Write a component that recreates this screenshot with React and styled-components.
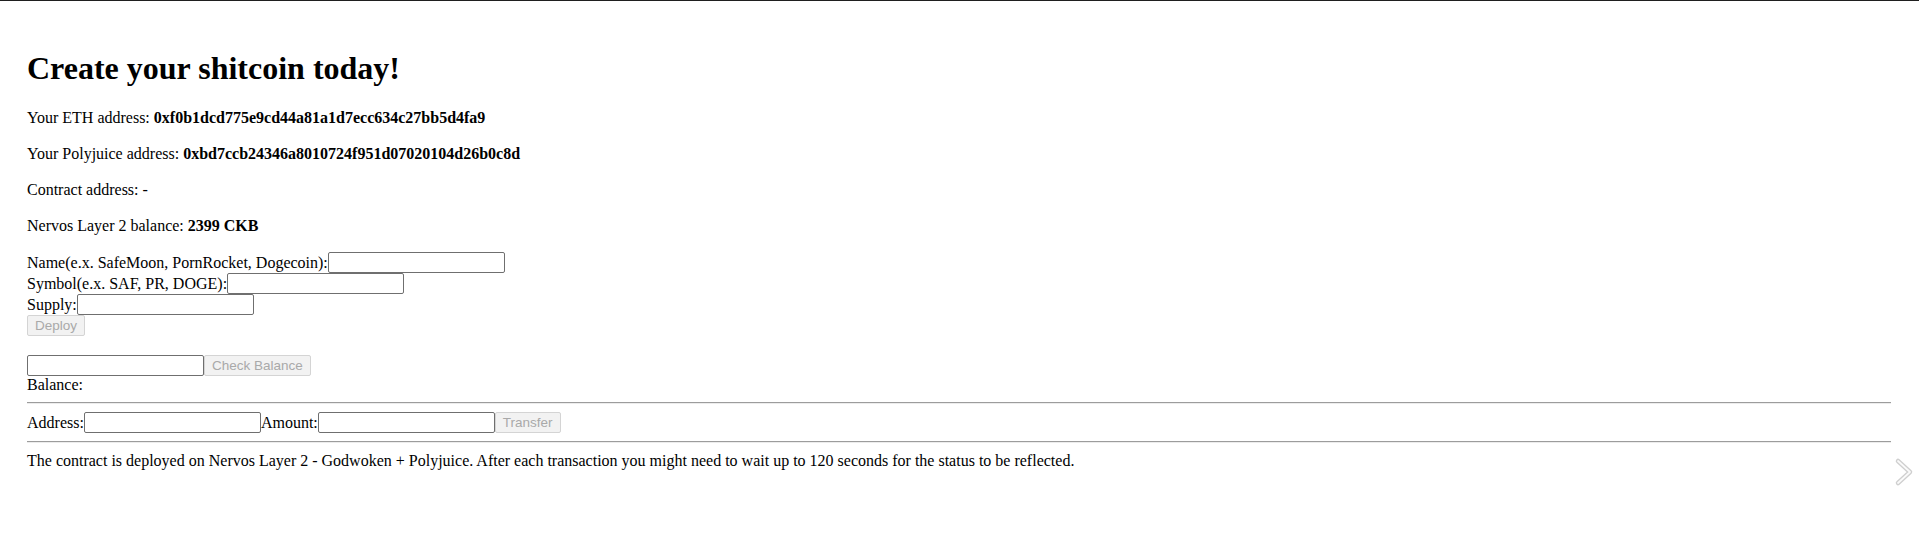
import React from "react";
import styled, { createGlobalStyle } from "styled-components";

const GlobalStyle = createGlobalStyle`
  body {
    margin: 0;
    background: #fff;
    border-top: 1px solid #1f1f1f;
    font-family: "Liberation Serif", "Times New Roman", serif;
    color: #000;
  }
`;

const Page = styled.div`
  position: relative;
  box-sizing: border-box;
  min-height: 535px;
  padding: 28px 28px 0 27px;
  font-size: 16px;
`;

const Title = styled.h1`
  font-size: 32px;
  line-height: 37px;
  font-weight: bold;
  margin: 21px 0;
`;

const Info = styled.p`
  margin: 16px 0;
  line-height: 20px;
`;

const FieldRow = styled.div`
  display: flex;
  align-items: center;
  height: 21px;
  line-height: 18px;
  margin-top: ${(p) => p.gap || 0}px;
`;

const Field = styled.input`
  box-sizing: border-box;
  width: 177px;
  height: 21px;
  margin: 0;
  padding: 1px 2px;
  border: 1px solid #6f6f6f;
  border-radius: 2px;
  background: #fff;
  font-family: "Liberation Sans", Arial, sans-serif;
  font-size: 13.33px;
`;

const Button = styled.button`
  box-sizing: border-box;
  height: 21px;
  margin: 0;
  padding: 1px 7px;
  border: 1px solid #d4d4d4;
  border-radius: 2px;
  background: #f2f2f2;
  color: #a9a9a9;
  font-family: "Liberation Sans", Arial, sans-serif;
  font-size: 13.5px;
`;

const Line = styled.div`
  line-height: 18px;
`;

const Rule = styled.hr`
  height: 0;
  margin: 8px 0;
  border: none;
  border-top: 1px solid #9c9c9c;
  border-bottom: 1px solid #ececec;
`;

const Note = styled.div`
  margin-top: 9px;
  line-height: 18px;
`;

const NextArrow = styled.svg`
  position: absolute;
  left: 1894px;
  top: 456px;
`;

export default function App() {
  return (
    <>
      <GlobalStyle />
      <Page>
        <Title>Create your shitcoin today!</Title>
        <Info>
          Your ETH address: <b>0xf0b1dcd775e9cd44a81a1d7ecc634c27bb5d4fa9</b>
        </Info>
        <Info>
          Your Polyjuice address:{" "}
          <b>0xbd7ccb24346a8010724f951d07020104d26b0c8d</b>
        </Info>
        <Info>Contract address: -</Info>
        <Info>
          Nervos Layer 2 balance: <b>2399 CKB</b>
        </Info>

        <FieldRow>
          Name(e.x. SafeMoon, PornRocket, Dogecoin):
          <Field />
        </FieldRow>
        <FieldRow>
          Symbol(e.x. SAF, PR, DOGE):
          <Field />
        </FieldRow>
        <FieldRow>
          Supply:
          <Field />
        </FieldRow>
        <FieldRow>
          <Button disabled>Deploy</Button>
        </FieldRow>

        <FieldRow gap={19}>
          <Field />
          <Button disabled>Check Balance</Button>
        </FieldRow>
        <Line>Balance:</Line>
        <Rule />
        <FieldRow>
          Address:
          <Field />
          Amount:
          <Field />
          <Button disabled>Transfer</Button>
        </FieldRow>
        <Rule />
        <Note>
          The contract is deployed on Nervos Layer 2 - Godwoken + Polyjuice.
          After each transaction you might need to wait up to 120 seconds for
          the status to be reflected.
        </Note>

        <NextArrow width="22" height="30" viewBox="0 0 22 30">
          <polyline
            points="4,4 16,15 4,26"
            fill="none"
            stroke="#cfcfcf"
            strokeWidth="4.5"
            strokeLinecap="round"
            strokeLinejoin="round"
          />
          <polyline
            points="4,4 16,15 4,26"
            fill="none"
            stroke="#fafafa"
            strokeWidth="1.8"
            strokeLinecap="round"
            strokeLinejoin="round"
          />
        </NextArrow>
      </Page>
    </>
  );
}
